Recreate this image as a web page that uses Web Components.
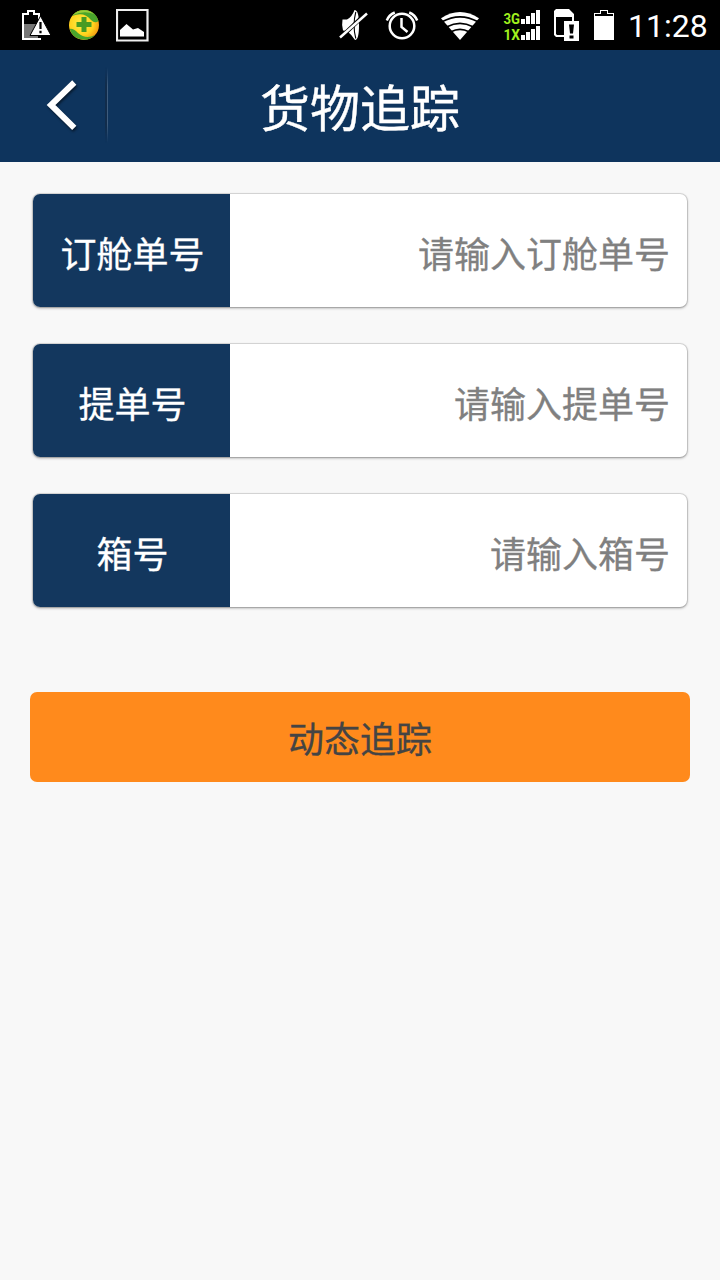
<!DOCTYPE html>
<html lang="zh-CN">
<head>
<meta charset="utf-8">
<title>货物追踪</title>
<style>
  html, body {
    margin: 0;
    height: 100%;
    background: #f8f8f8;
  }
  body {
    font-family: Roboto, "Noto Sans CJK SC", sans-serif;
    overflow: hidden;
  }
</style>
</head>
<body>
<tracking-page>
  <status-bar time="11:28"></status-bar>
  <title-bar>货物追踪</title-bar>
  <tracking-form>
    <form-row label="订舱单号">请输入订舱单号</form-row>
    <form-row label="提单号">请输入提单号</form-row>
    <form-row label="箱号">请输入箱号</form-row>
    <submit-button slot="action">动态追踪</submit-button>
  </tracking-form>
</tracking-page>

<template id="tracking-page">
  <style>
    :host {
      display: flex;
      flex-direction: column;
      width: 720px;
      height: 1280px;
      background: #f8f8f8;
    }
  </style>
  <slot></slot>
</template>

<template id="status-bar">
  <style>
    :host {
      display: flex;
      justify-content: space-between;
      box-sizing: border-box;
      height: 50px;
      padding: 0 12px 0 20px;
      background: #000;
      color: #fff;
    }
    .group { display: flex; }
    .left { gap: 16px; }
    .right { gap: 14px; }
    svg { display: block; height: 50px; flex: none; }
    .time {
      width: 79px;
      font: 32px/50px Roboto, sans-serif;
      padding-top: 1px;
      box-sizing: border-box;
      white-space: nowrap;
      text-indent: -1px;
    }
  </style>
  <div class="group left">
    <!-- low battery warning -->
    <svg width="32" viewBox="20 0 32 50">
      <path fill="#777" d="M24 24h14v15H24z"/>
      <path fill="none" stroke="#fff" stroke-width="2" d="M41 39H23V14h5v-3h6v3h5v6"/>
      <path fill="#fff" stroke="#000" stroke-width="1" stroke-linejoin="round" d="M40.5 16 51 35.5H30z"/>
      <path stroke="#000" stroke-width="2.200" d="M40.500 22v7M40.500 30.700v2.500"/>
    </svg>
    <!-- security app -->
    <svg width="32" viewBox="68 0 32 50">
      <defs>
        <radialGradient id="ball" cx=".42" cy=".45" r=".6">
          <stop offset="0" stop-color="#fff04a"/>
          <stop offset=".65" stop-color="#ffd21c"/>
          <stop offset="1" stop-color="#f39a12"/>
        </radialGradient>
      </defs>
      <circle cx="84" cy="25" r="15" fill="url(#ball)"/>
      <path fill="#4aa52c" d="M72 16A15 15 0 0 1 98.500 21Q95 24 91 20 84 11 72 16z"/>
      <path fill="#9bce38" d="M73 15A15 15 0 0 1 94 14Q84 10 73 15z"/>
      <path fill="#4aa52c" d="M69.700 29Q73 28 78 33 86 40 95 35A15 15 0 0 1 69.700 29z"/>
      <path fill="#479b23" d="M81.500 17h5v5h5v5h-5v5h-5v-5h-5v-5h5z"/>
    </svg>
    <!-- screenshot saved -->
    <svg width="33" viewBox="116 0 33 50">
      <path fill="none" stroke="#eee" stroke-width="2.200" d="M117 10h30.500v30.500H117z"/>
      <path fill="#fff" d="M120 36.500V30l6.500-6 6.500 5.500 5-1.500 6 4v4.500z"/>
    </svg>
  </div>
  <div class="group right">
    <!-- muted -->
    <svg width="31" viewBox="339.500 0 31 50">
      <path fill="#fff" d="M343 19.500h4.500q5-2.500 7.500-9.500 4.500 0 4.500 15T355.500 40q-3-5-8-9l-4-.5q-1.500-5.500-.5-11z"/>
      <path fill="none" stroke="#000" stroke-width="1.100" d="M356.300 12q-3.500 13 0 26.500"/>
      <path stroke="#000" stroke-width="4.200" d="M339 39.500 368.500 11.500"/>
      <path stroke="#fff" stroke-width="2.500" d="M340.500 37.500 367.500 13.500"/>
    </svg>
    <!-- alarm -->
    <svg width="36" viewBox="384 0 36 50">
      <g fill="none" stroke="#fff" stroke-width="2.500">
        <circle cx="402" cy="26" r="12.300"/>
        <path d="M401.500 18v9l6 5M386.800 20.500q2-5.500 8-8M417.200 20.500q-2-5.500-8-8"/>
      </g>
    </svg>
    <!-- wifi -->
    <svg width="40" viewBox="440 0 40 50" style="margin-left: 6px">
      <path fill="#fff" d="M460 40 441 18.200Q460 5.800 479 18.200z"/>
      <g fill="none" stroke="#000" stroke-width="1.700">
        <path d="M442 21.800q18-10 36 0M447 26.800q13-7 26 0M451 31.800q9-5 18 0"/>
      </g>
    </svg>
    <!-- 3G / 1X signal -->
    <svg width="39" viewBox="502 0 39 50" style="margin-left: 8px">
      <g fill="#a0f01e" font-family="Roboto, sans-serif" font-weight="700" font-size="15.500">
        <text x="503.500" y="24" textLength="16.500" lengthAdjust="spacingAndGlyphs">3G</text>
        <text x="503.500" y="40" textLength="16.500" lengthAdjust="spacingAndGlyphs">1X</text>
      </g>
      <path fill="#fff" d="M521 19h4v5h-4zM526 16h4v8h-4zM531 13h4v11h-4zM536 10h4v14h-4zM521 35h4v5h-4zM526 32h4v8h-4zM531 29h4v11h-4zM536 26h4v14h-4z"/>
    </svg>
    <!-- sim card alert -->
    <svg width="26" viewBox="554 0 26 50" style="margin-left: -1px">
      <path fill="#fff" fill-rule="evenodd" d="M556 9h13l5 5v7h5v20h-15v-4h-8l-2-2V11zM556 17v17l1 1h7V21h8v-4z"/>
      <path fill="#000" d="M569 24.500h5l-1 9h-3zM569.500 35.500h4v3h-4z"/>
    </svg>
    <!-- battery -->
    <svg width="21" viewBox="594 0 21 50">
      <path fill="#fff" fill-rule="evenodd" d="M594 13h6v-3h8v3h6v27h-20zM595 14v2h18v-2h-6v-3h-6v3z"/>
    </svg>
    <div class="time"></div>
  </div>
</template>

<template id="title-bar">
  <style>
    :host {
      display: grid;
      grid-template-columns: 109px 1fr 109px;
      grid-template-rows: 112px;
      height: 112px;
      background: #0e345d;
      color: #fff;
    }
    .back {
      display: flex;
      align-items: center;
      justify-content: space-between;
      padding: 0 1px 3px 44px;
    }
    .back svg { filter: drop-shadow(1px 2px 1px rgba(0, 0, 0, .5)); }
    .divider {
      width: 3px;
      height: 76px;
      background: linear-gradient(90deg, #112c4b 0 2px, #3e5c7d 2px 3px);
      -webkit-mask-image: linear-gradient(transparent, #000 25%, #000 75%, transparent);
      mask-image: linear-gradient(transparent, #000 25%, #000 75%, transparent);
    }
    h1 {
      margin: 0;
      font-size: 50px;
      font-weight: 400;
      line-height: 120px;
      text-align: center;
      -webkit-text-stroke: .4px;
    }
  </style>
  <div class="back">
    <svg width="36" height="60" viewBox="44 74 36 60">
      <path fill="none" stroke="#fff" stroke-width="6" d="M74.300 81.500 51 104l23.300 22.800"/>
    </svg>
    <div class="divider"></div>
  </div>
  <h1><slot></slot></h1>
</template>

<template id="tracking-form">
  <style>
    :host {
      display: flex;
      flex-direction: column;
      gap: 85px;
      padding: 32px 30px;
    }
    .rows {
      display: flex;
      flex-direction: column;
      gap: 37px;
      padding: 0 3px;
    }
  </style>
  <div class="rows"><slot></slot></div>
  <slot name="action"></slot>
</template>

<template id="form-row">
  <style>
    :host {
      display: flex;
      height: 113px;
      border-radius: 7px;
      background: #fff;
      box-shadow: 0 0 0 1px rgba(0, 0, 0, .1), 0 1px 3px rgba(0, 0, 0, .38);
      overflow: hidden;
      font-size: 36px;
      line-height: 124px;
      -webkit-text-stroke: .3px;
    }
    .label {
      box-sizing: border-box;
      width: 197px;
      padding-left: 2px;
      background: #13375e;
      color: #fff;
      text-align: center;
    }
    .hint {
      flex: 1;
      padding-right: 17px;
      color: #808080;
      text-align: right;
    }
  </style>
  <div class="label"></div>
  <div class="hint"><slot></slot></div>
</template>

<template id="submit-button">
  <style>
    :host { display: block; }
    button {
      display: block;
      width: 100%;
      height: 90px;
      padding: 8px 0 0;
      border: 0;
      border-radius: 7px;
      background: #ff8a1c;
      color: #444;
      font: inherit;
      font-size: 36px;
      line-height: 82px;
      -webkit-text-stroke: .3px;
    }
  </style>
  <button type="button"><slot></slot></button>
</template>

<script>
  class BaseElement extends HTMLElement {
    constructor() {
      super();
      const template = document.getElementById(this.localName);
      this.attachShadow({ mode: "open" });
      this.shadowRoot.appendChild(template.content.cloneNode(true));
    }
  }

  customElements.define("tracking-page", class TrackingPage extends BaseElement {});

  customElements.define(
    "status-bar",
    class StatusBar extends BaseElement {
      connectedCallback() {
        this.shadowRoot.querySelector(".time").textContent = this.getAttribute("time");
      }
    }
  );

  customElements.define("title-bar", class TitleBar extends BaseElement {});
  customElements.define("tracking-form", class TrackingForm extends BaseElement {});

  customElements.define(
    "form-row",
    class FormRow extends BaseElement {
      connectedCallback() {
        this.shadowRoot.querySelector(".label").textContent = this.getAttribute("label");
      }
    }
  );

  customElements.define("submit-button", class SubmitButton extends BaseElement {});
</script>
</body>
</html>
